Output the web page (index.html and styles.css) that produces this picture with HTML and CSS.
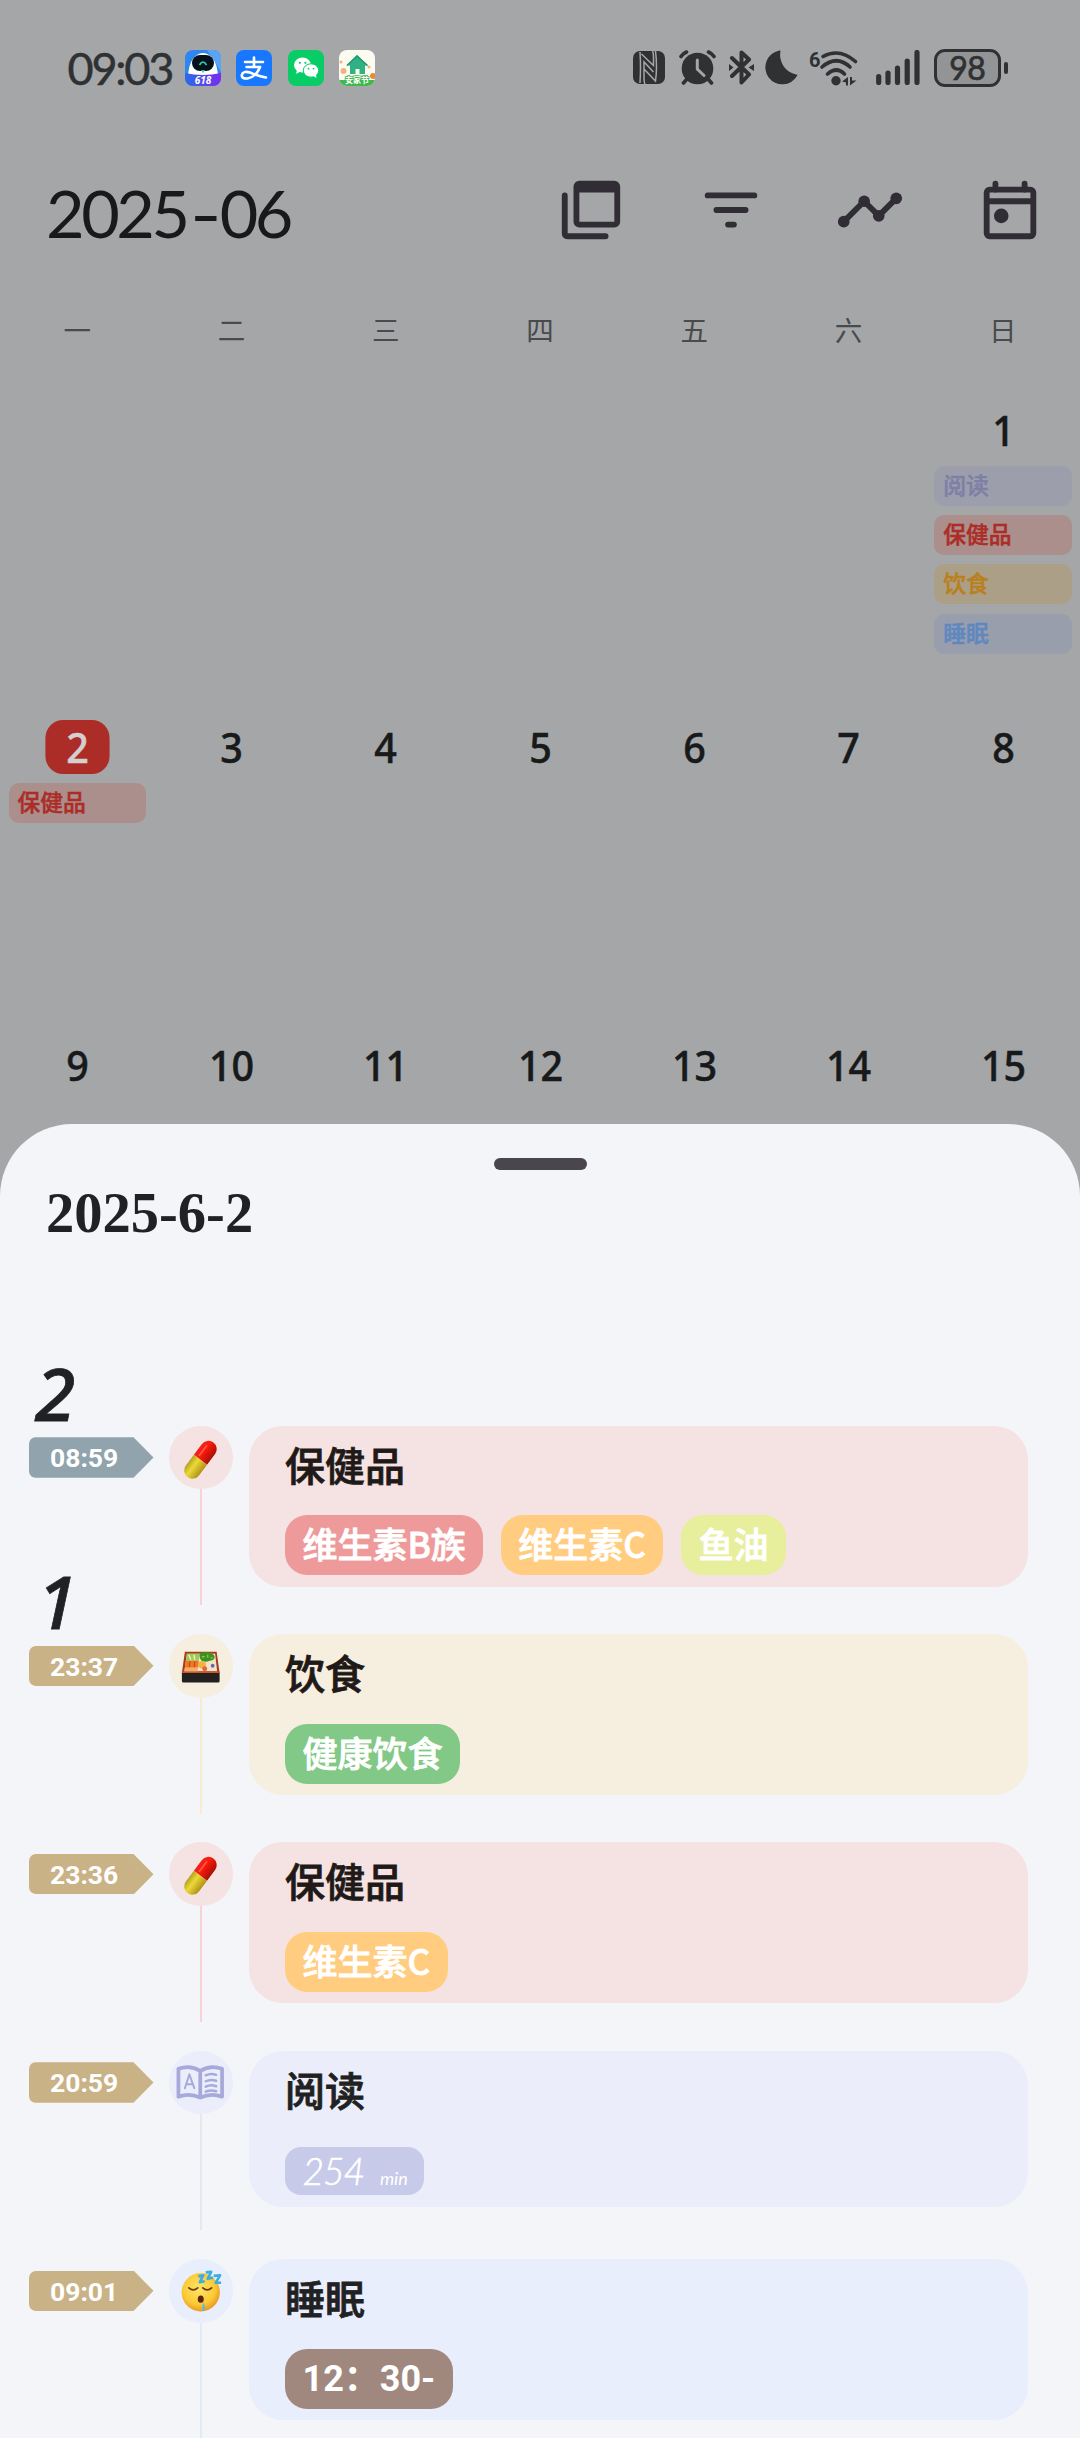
FILE: index.html
```html
<!DOCTYPE html>
<html lang="zh-CN">
<head>
<meta charset="utf-8">
<title>2025-06</title>
<link rel="stylesheet" href="styles.css">
</head>
<body>
<div class="screen">
  <div class="status">
    <span class="clock">09:03</span>
    <div class="apps">
      <svg class="app" viewBox="0 0 36 36">
        <defs>
          <clipPath id="ac"><rect width="36" height="36" rx="8"/></clipPath>
          <linearGradient id="jd" x1="0" x2="1"><stop offset="0" stop-color="#2a6be8"/><stop offset="1" stop-color="#7a2bf0"/></linearGradient>
        </defs>
        <g clip-path="url(#ac)">
          <rect width="36" height="36" fill="#2f86ee"/>
          <path d="M22 0L36 0L36 22L30 12Z" fill="#5aa4f5"/>
          <path d="M3 25Q5 4 18 3Q31 4 33 25Z" fill="#fff"/>
          <rect x="7" y="5" width="22" height="16" rx="8" fill="#07121c"/>
          <path d="M14.500 15Q18 9 21.500 15" fill="none" stroke="#2ecfae" stroke-width="1.700"/>
          <path d="M16 20h4l-2 3z" fill="#2ecfae"/>
          <path d="M0 23Q18 27 36 23V36H0Z" fill="url(#jd)"/>
          <text x="18" y="34" class="tiny-618">618</text>
        </g>
      </svg>
      <svg class="app" viewBox="0 0 36 36">
        <rect width="36" height="36" rx="8" fill="#1777ff"/>
        <g fill="none" stroke="#fff" stroke-linecap="round">
          <path d="M9 12H27M18 7.500V16.500M10.500 17H24" stroke-width="2.600"/>
          <path d="M24 17Q20 27 11.500 28.500Q5.500 29 5.800 25Q7 20.500 14 22.500Q22 26 30 27.500" stroke-width="2.600"/>
        </g>
      </svg>
      <svg class="app" viewBox="0 0 36 36">
        <rect width="36" height="36" rx="8" fill="#08cd66"/>
        <ellipse cx="14.500" cy="15" rx="8.500" ry="7.400" fill="#fff"/>
        <path d="M9 19l-.7 5 4.500-3z" fill="#fff"/>
        <ellipse cx="23" cy="20.500" rx="7.700" ry="6.700" fill="#fff" stroke="#08cd66" stroke-width="1"/>
        <path d="M25 26l3.500 2-.7-4z" fill="#fff"/>
        <g fill="#08cd66"><circle cx="11.800" cy="12.800" r="1.100"/><circle cx="17.400" cy="12.800" r="1.100"/><circle cx="20.500" cy="18.700" r=".9"/><circle cx="25.500" cy="18.700" r=".9"/></g>
      </svg>
      <svg class="app" viewBox="0 0 36 36">
        <g clip-path="url(#ac)">
          <rect width="36" height="36" fill="#fbfbef"/>
          <rect y="30" width="36" height="6" fill="#3fb84f"/>
          <circle cx="4.500" cy="21" r="3" fill="#f4b27c"/><circle cx="2" cy="12" r="1.500" fill="#f4b27c"/><circle cx="30" cy="17" r="1.500" fill="#f4b27c"/><circle cx="34" cy="26" r="3" fill="#ee8a35"/>
          <path d="M18 5L29 15.500H26V24H20.500V19H16.500V24H11V15.500H7.500Z" fill="#2fb184"/>
          <path d="M8 15.500L18 6L28.500 15.500" fill="none" stroke="#1f9a70" stroke-width="1.500"/>
          <text x="18" y="33" class="tiny-home">安家节</text>
        </g>
      </svg>
    </div>
    <div class="indicators">
      <svg class="i-nfc" viewBox="0 0 32 33">
        <rect width="32" height="33" rx="7" fill="#2f3133"/>
        <g fill="none" stroke="#a4a6a8" stroke-width="1.500">
          <path d="M7 1Q8 16 7 32M8.500 3L20.500 14.500V5Q20.500 2 19.500 0M12 33Q11 31 11 28V11L20.500 21M11 18L22.500 30Q24.500 16 22.500 0"/>
        </g>
      </svg>
      <svg class="i-alarm" viewBox="0 0 37 35">
        <circle cx="18.500" cy="18.500" r="15.800" fill="#2f3133"/>
        <g fill="none" stroke="#2f3133" stroke-linecap="round" stroke-width="3.600"><path d="M2 6.500Q4 3.500 7.500 2M35 6.500Q33 3.500 29.500 2M7.500 29.500L4.500 33M29.500 29.500L32.500 33"/></g>
        <path d="M18.300 10V19L25 25.500" fill="none" stroke="#a4a6a8" stroke-width="3" stroke-linecap="round"/>
      </svg>
      <svg class="i-bt" viewBox="0 0 25 35">
        <path d="M3 8L20 24.500L12.500 32.500V2.500L20 9.500L3 26" fill="none" stroke="#2f3133" stroke-width="4" stroke-linejoin="round" stroke-linecap="round"/>
        <path d="M0 14L4.500 17.500L0 21ZM25 14L19.500 17.500L25 21Z" fill="#2f3133"/>
      </svg>
      <svg class="i-moon" viewBox="0 0 33 35"><path d="M15.500 1A20 20 0 0 0 31 24.500Q33 24 32 26A17 17 0 1 1 13.500 .8Q15.800 0 15.500 1Z" fill="#2f3133"/></svg>
      <svg class="i-wifi" viewBox="0 0 50 36">
        <text x="0" y="16.500" class="six">6</text>
        <g fill="none" stroke="#2f3133" stroke-width="3.600" stroke-linecap="round">
          <path d="M14 6.500Q30.500 -2.500 46.500 11.500M13 17Q27.500 4.500 41 17M18.500 24Q27.500 16 35.500 24"/>
        </g>
        <circle cx="27" cy="30.800" r="4.700" fill="#2f3133"/>
        <path d="M33 31.500L39 27V35.500H37V32.500ZM41 27V35.500L47.500 30.500H43V27Z" fill="#2f3133"/>
      </svg>
      <svg class="i-signal" viewBox="0 0 44 35">
        <path d="M2.700 26.500V32.500M12 23V32.500M21.500 18V32.500M31.200 11V32.500M41 2.500V32.500" stroke="#2f3133" stroke-width="5.200" stroke-linecap="round"/>
      </svg>
      <div class="battery"><span class="battery-body">98</span><span class="battery-nub"></span></div>
    </div>
  </div>

  <header class="topbar">
    <h1 class="month">2025<span class="dash">-</span>06</h1>
    <nav class="actions">
      <svg viewBox="0 0 24 24"><rect x="7" y="3" width="14" height="14" rx="1" fill="none" stroke="#302e34" stroke-width="2"/><path d="M7 2.500h14v3.500h-14z" fill="#302e34"/><path d="M3 7V20Q3 21 4 21H17" fill="none" stroke="#302e34" stroke-width="2" stroke-linecap="round"/></svg>
      <svg viewBox="0 0 24 24"><path d="M4 7H20M7 12H17M11 17H13" stroke="#302e34" stroke-width="2" stroke-linecap="round"/></svg>
      <svg viewBox="0 0 24 24"><path d="M3 16L10 9L15 14L21 8" fill="none" stroke="#302e34" stroke-width="2"/><g fill="#302e34"><circle cx="3" cy="16" r="2"/><circle cx="10" cy="9" r="2"/><circle cx="15" cy="14" r="2"/><circle cx="21" cy="8" r="2"/></g></svg>
      <svg viewBox="0 0 24 24"><rect x="4" y="5" width="16" height="16" rx="1" fill="none" stroke="#302e34" stroke-width="2"/><path d="M4 9H20" stroke="#302e34" stroke-width="2"/><path d="M7 3V5M17 3V5" stroke="#302e34" stroke-width="2" stroke-linecap="round"/><circle cx="9" cy="14" r="2.500" fill="#302e34"/></svg>
    </nav>
  </header>

  <div class="weekdays"><span>一</span><span>二</span><span>三</span><span>四</span><span>五</span><span>六</span><span>日</span></div>

  <div class="month-grid">
    <div class="cell"></div><div class="cell"></div><div class="cell"></div><div class="cell"></div><div class="cell"></div><div class="cell"></div>
    <div class="cell">
      <span class="date">1</span>
      <span class="event ev-read">阅读</span>
      <span class="event ev-health">保健品</span>
      <span class="event ev-food">饮食</span>
      <span class="event ev-sleep">睡眠</span>
    </div>
    <div class="cell"><span class="date today">2</span><span class="event ev-health">保健品</span></div>
    <div class="cell"><span class="date">3</span></div>
    <div class="cell"><span class="date">4</span></div>
    <div class="cell"><span class="date">5</span></div>
    <div class="cell"><span class="date">6</span></div>
    <div class="cell"><span class="date">7</span></div>
    <div class="cell"><span class="date">8</span></div>
    <div class="cell"><span class="date">9</span></div>
    <div class="cell"><span class="date">10</span></div>
    <div class="cell"><span class="date">11</span></div>
    <div class="cell"><span class="date">12</span></div>
    <div class="cell"><span class="date">13</span></div>
    <div class="cell"><span class="date">14</span></div>
    <div class="cell"><span class="date">15</span></div>
  </div>

  <section class="sheet">
    <div class="handle"></div>
    <h2 class="sheet-date">2025-6-2</h2>
    <div class="timeline">
      <div class="entry health">
        <div class="when"><span class="day">2</span><span class="time recent">08:59</span></div>
        <div class="node">
          <svg class="badge" viewBox="0 0 64 64">
            <defs>
              <linearGradient id="pr" x1="0" x2="1"><stop offset="0" stop-color="#e8281c"/><stop offset=".35" stop-color="#ff1a0c"/><stop offset="1" stop-color="#a80f08"/></linearGradient>
              <linearGradient id="py" x1="0" x2="1"><stop offset="0" stop-color="#b5a21e"/><stop offset=".4" stop-color="#ecd936"/><stop offset="1" stop-color="#b0921a"/></linearGradient>
              <g id="pill">
                <g transform="translate(31.700 34) rotate(37)">
                  <path d="M-8.300 0V-13.500A8.300 8.300 0 0 1 8.300 -13.500V0Z" fill="url(#pr)"/>
                  <path d="M-8.300 0V13.500A8.300 8.300 0 0 0 8.300 13.500V0Z" fill="url(#py)"/>
                  <path d="M-3.500 -15V-3" stroke="#ff7c70" stroke-width="1.800" stroke-linecap="round" opacity=".6"/>
                </g>
              </g>
            </defs>
            <use href="#pill"/>
          </svg>
          <span class="stem"></span>
        </div>
        <div class="card"><h3>保健品</h3><div class="tags"><span class="tag red">维生素B族</span><span class="tag orange">维生素C</span><span class="tag lime">鱼油</span></div></div>
      </div>

      <div class="entry food">
        <div class="when"><span class="day one">1</span><span class="time">23:37</span></div>
        <div class="node">
          <svg class="badge" viewBox="0 0 64 64">
            <path d="M16 18H48L51 39H13Z" fill="#a63c1c"/>
            <path d="M18 20H46.500L48.500 37.500H15.500Z" fill="#f1e4c8"/>
            <path d="M18 20H31L30 27H17Z" fill="#9ccb5a"/><path d="M20 21l2 5M25 21l1 5" stroke="#e6f3b8" stroke-width="1.500"/>
            <path d="M31 20q2-3 5-1q4-2 6 1q4 0 4 4q-1 3-5 3q-4 2-8 0q-3-3-2-7z" fill="#3f8f23"/>
            <path d="M33 23h3M39 21v3M42 24h2" stroke="#81c94a" stroke-width="1.500"/>
            <path d="M17 27H30L29.500 34H16Z" fill="#ee7526"/><path d="M21 27.500L20.500 33.500M26 27.500L25.500 33.500" stroke="#b9490f" stroke-width="1"/>
            <path d="M16 34H29V38H15.500Z" fill="#f3ae68"/>
            <circle cx="33.500" cy="31" r="3.700" fill="#f3b43c"/><circle cx="36" cy="35" r="2.500" fill="#e8623c"/>
            <circle cx="44" cy="32" r="1.900" fill="#6b62b5"/>
            <path d="M13 38.500H51V47Q51 49 49.500 49H14.500Q13 49 13 47Z" fill="#232020"/>
            <path d="M13 38.500H51" stroke="#d0562a" stroke-width="1.500"/>
          </svg>
          <span class="stem"></span>
        </div>
        <div class="card"><h3>饮食</h3><div class="tags"><span class="tag green">健康饮食</span></div></div>
      </div>

      <div class="entry health">
        <div class="when"><span class="day"></span><span class="time">23:36</span></div>
        <div class="node"><svg class="badge" viewBox="0 0 64 64"><use href="#pill"/></svg><span class="stem"></span></div>
        <div class="card"><h3>保健品</h3><div class="tags"><span class="tag orange">维生素C</span></div></div>
      </div>

      <div class="entry read">
        <div class="when"><span class="day"></span><span class="time">20:59</span></div>
        <div class="node">
          <svg class="badge" viewBox="0 0 64 64">
            <g fill="none" stroke="#a5aadb" stroke-linecap="round" stroke-linejoin="round">
              <path d="M31.500 20Q21 13.500 9.500 18V46Q21 42 31.500 47Q42 42 53.500 46V18Q42 13.500 31.500 20ZM31.500 20V46" stroke-width="3.800"/>
              <path d="M16 37.500L20.500 23.500L25.500 37.500M17.500 33.500H24" stroke-width="2"/>
              <path d="M37 24.500Q42 22 47.500 24M37 30.500Q42 28 47.500 30M37 36Q42 33.500 47.500 35.500M37 41Q42 39 47.500 40.500" stroke-width="2.500"/>
            </g>
          </svg>
          <span class="stem"></span>
        </div>
        <div class="card"><h3>阅读</h3><div class="tags"><span class="tag duration">254<small>min</small></span></div></div>
      </div>

      <div class="entry sleep">
        <div class="when"><span class="day"></span><span class="time">09:01</span></div>
        <div class="node">
          <svg class="badge" viewBox="0 0 64 64">
            <defs><radialGradient id="face" cx=".45" cy=".4" r=".6"><stop offset="0" stop-color="#ffe566"/><stop offset=".7" stop-color="#fbc936"/><stop offset="1" stop-color="#e99b22"/></radialGradient></defs>
            <circle cx="32" cy="33.500" r="19.300" fill="url(#face)"/>
            <path d="M20 29Q24.500 33 29 29M34 29Q38.500 33 43 29" fill="none" stroke="#6b3c12" stroke-width="1.700" stroke-linecap="round"/>
            <ellipse cx="32" cy="40.500" rx="3" ry="3.600" fill="#5b2413"/>
            <path d="M34.500 43.500Q37.500 50 35.500 52Q33.500 52.500 33.500 49Z" fill="#58b9dd"/>
            <path d="M29.500 17.500L34.500 16.500L31 23.500L36 22.500M37 13.500L42.500 13L39 20L44.500 19M45 17L51.500 16.500L47 24L52.500 24" fill="none" stroke="#3aaee2" stroke-width="2.600" stroke-linejoin="round"/>
          </svg>
          <span class="stem"></span>
        </div>
        <div class="card"><h3>睡眠</h3><div class="tags"><span class="tag brown">12：30-</span></div></div>
      </div>
    </div>
  </section>
</div>
</body>
</html>
```
FILE: styles.css
```css
* { box-sizing: border-box; }
body { margin: 0; background: #a4a6a8; }
h1, h2, h3 { margin: 0; font-weight: 400; }
svg { display: block; }

.screen {
  position: relative;
  width: 1080px;
  height: 2438px;
  overflow: hidden;
  background: #a4a6a8;
  color: #17191a;
  font-family: "Noto Sans", "Noto Sans CJK SC", sans-serif;
}

/* status bar */
.status { display: flex; align-items: center; height: 135px; padding: 0 72px 0 67.500px; }
.clock {
  width: 117.500px;
  font: 400 45px/60px Lato, sans-serif;
  letter-spacing: -2.200px;
  -webkit-text-stroke: .5px currentColor;
  color: #2f3133;
}
.apps { display: flex; gap: 15.300px; }
.app { width: 36px; height: 36px; }
.tiny-618 { font: italic 700 10px "Open Sans", sans-serif; fill: #fff; text-anchor: middle; }
.tiny-home { font: 700 8px "Noto Sans CJK SC", sans-serif; fill: #fff; stroke: #3fb84f; stroke-width: 1.500px; paint-order: stroke; text-anchor: middle; }
.indicators { display: flex; align-items: center; margin-left: auto; }
.i-nfc { width: 32px; height: 33px; margin-right: 13.500px; }
.i-alarm { width: 37px; height: 35px; margin-right: 13px; }
.i-bt { width: 25px; height: 35px; margin-right: 11px; }
.i-moon { width: 33px; height: 35px; margin-right: 11px; }
.i-wifi { width: 50px; height: 36px; margin-right: 17.500px; overflow: visible; }
.i-signal { width: 44px; height: 35px; margin-right: 13.300px; }
.six { font: 700 20px Roboto, sans-serif; fill: #2f3133; }
.battery { display: flex; align-items: center; gap: 3px; }
.battery-body {
  width: 67.500px;
  height: 38px;
  border: 3px solid #2f3133;
  border-radius: 11px;
  background: #929495;
  font: 400 32px/31px Lato, sans-serif;
  letter-spacing: -.5px;
  -webkit-text-stroke: .7px currentColor;
  text-align: center;
  color: #2f3133;
}
.battery-nub { width: 4px; height: 12px; border-radius: 2px; background: #2f3133; }

/* header */
.topbar { display: flex; align-items: center; justify-content: space-between; height: 150px; padding: 0 35px 0 46px; }
.month { font: 400 66.500px/80px Lato, sans-serif; letter-spacing: -3.400px; padding-top: 3px; }
.dash { display: inline-block; width: 33px; text-align: center; transform: scaleX(1.300); }
.actions { display: flex; gap: 69.700px; }
.actions svg { width: 70px; height: 70px; }

.weekdays { display: grid; grid-template-columns: repeat(7, 1fr); height: 90px; }
.weekdays span {
  text-align: center;
  font: 400 27.500px/88px "Noto Sans CJK SC", sans-serif;
  color: #484a4c;
}

/* calendar */
.month-grid { display: grid; grid-template-columns: repeat(7, 1fr); grid-auto-rows: 317.330px; }
.cell { display: flex; flex-direction: column; padding: 28px 8px 0 8.500px; }
.date {
  align-self: center;
  width: 69px;
  height: 54px;
  margin-bottom: 9px;
  text-align: center;
  font-size: 42.500px;
  font-weight: 500;
  line-height: 53.500px;
  transform: scaleX(.93);
  -webkit-text-stroke: .5px currentColor;
}
.today { border-radius: 19px / 18px; background: #ac2d27; color: #d5d0cf; }
.event {
  height: 40px;
  margin-bottom: 9.200px;
  padding-left: 9px;
  border-radius: 10px;
  font: 500 22.800px/38px "Noto Sans CJK SC", sans-serif;
  -webkit-text-stroke: .5px currentColor;
}
.ev-read { background: #9c9fab; color: #7e7fa6; }
.ev-health { background: #ab8f8c; color: #ac2d27; }
.ev-food { background: #ac9f87; color: #b9801e; }
.ev-sleep { background: #989eac; color: #5f87c0; }

/* bottom sheet over the calendar */
.sheet {
  position: absolute;
  left: 0;
  right: 0;
  top: 1124px;
  bottom: 0;
  overflow: hidden;
  padding-top: 34px;
  border-radius: 72px 72px 0 0;
  background: #f3f5f9;
  color: #1f2122;
}
.handle { width: 93px; height: 12px; margin: 0 auto; border-radius: 6px; background: #49464e; }
.sheet-date {
  height: 82px;
  padding-left: 46px;
  font: 700 56.500px/86px "Liberation Serif", serif;
  letter-spacing: 0;
}
.timeline { padding: 103.700px 0 0 29px; }
.entry { display: grid; grid-template-columns: 140px 80.300px 778.700px; height: 208.330px; }
.when { display: flex; flex-direction: column; }
.day {
  height: 81.600px;
  padding-left: 6px;
  font: italic 500 73px/73px "Noto Sans", sans-serif;
  -webkit-text-stroke: .8px currentColor;
}
.one { padding-left: 8px; }
.time {
  width: 124.500px;
  height: 40.500px;
  padding-left: 21px;
  border-radius: 7px;
  background: #c9b286;
  clip-path: polygon(0 0, 104.500px 0, 124.500px 50%, 104.500px 100%, 0 100%);
  font: 700 26.500px/41px Roboto, sans-serif;
  color: #fff;
}
.recent { background: #91a3ac; }
.node { width: 63.500px; margin-top: 70px; display: flex; flex-direction: column; align-items: center; }
.badge { flex: none; width: 63.500px; height: 63.500px; border-radius: 50%; background: var(--tint); }
.stem { flex: none; width: 2.500px; height: 116px; background: var(--line); }
.card {
  height: 161px;
  margin-top: 70px;
  padding: 10px 0 0 35.700px;
  border-radius: 34px;
  background: var(--tint);
}
.card h3 {
  height: 79.500px;
  font: 500 40px/56px "Noto Sans CJK SC", sans-serif;
  -webkit-text-stroke: .8px currentColor;
}
.health { --tint: #f5e2e2; --line: #f7d3d3; }
.food { --tint: #f6eede; --line: #faebcf; }
.read { --tint: #ebeefa; --line: #e6e8f1; }
.sleep { --tint: #e8eefb; --line: #e0eafb; }
.health h3, .food h3 { color: #1f1a18; }
.read .card { height: 156.500px; }

.tags { display: flex; gap: 17.500px; }
.tag {
  height: 60px;
  padding: 0 17.500px;
  border-radius: 22px;
  font: 500 35px/56.500px "Noto Sans CJK SC", sans-serif;
  -webkit-text-stroke: .8px currentColor;
  color: #fff;
  white-space: nowrap;
}
.red { background: #ef9a9a; }
.orange { background: #ffcc80; }
.lime { background: #e7ee9c; }
.green { background: #82c886; }
.brown { width: 168.500px; background: #a1887f; font: 700 36px/60px Roboto, "Noto Sans CJK SC", sans-serif; -webkit-text-stroke: 0; }
.duration {
  width: 139px;
  height: 48px;
  margin-top: 6.500px;
  border-radius: 16px;
  background: #c7cae8;
  font: italic 300 37px/48px Lato, sans-serif;
  letter-spacing: -1px;
  -webkit-text-stroke: .6px currentColor;
}
.duration small { margin-left: 16px; font-size: 18px; font-weight: 400; letter-spacing: 0; -webkit-text-stroke: 0; }
```
